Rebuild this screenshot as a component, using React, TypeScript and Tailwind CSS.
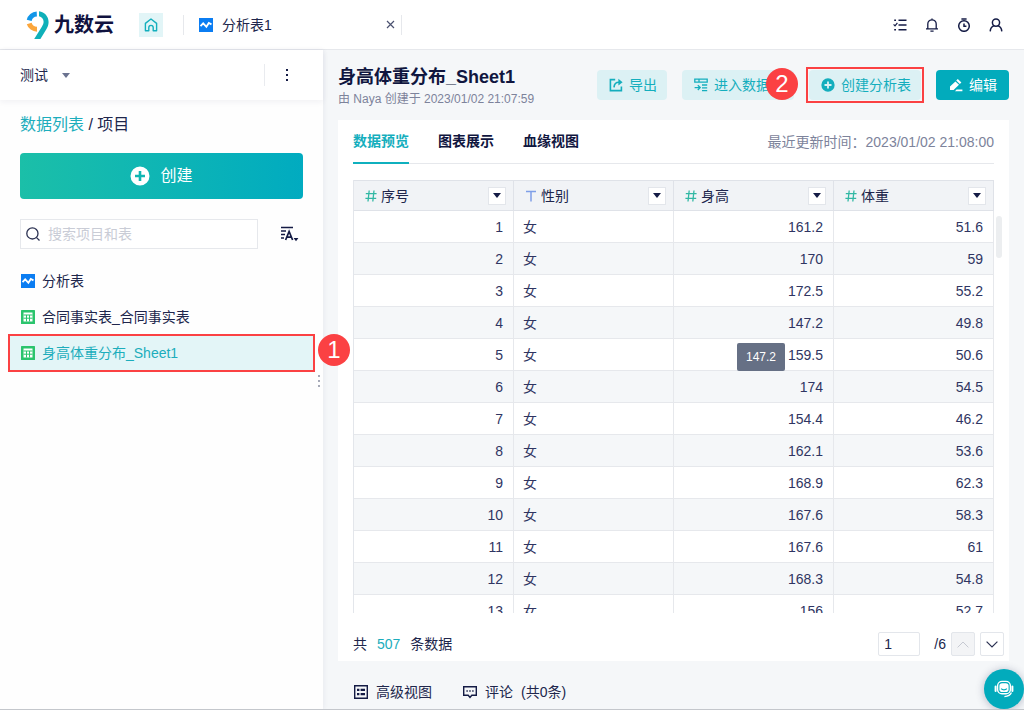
import { clsx } from 'clsx';
import type { ReactNode } from 'react';

const ROWS: [number, string, string, string][] = [
  [1, '女', '161.2', '51.6'],
  [2, '女', '170', '59'],
  [3, '女', '172.5', '55.2'],
  [4, '女', '147.2', '49.8'],
  [5, '女', '159.5', '50.6'],
  [6, '女', '174', '54.5'],
  [7, '女', '154.4', '46.2'],
  [8, '女', '162.1', '53.6'],
  [9, '女', '168.9', '62.3'],
  [10, '女', '167.6', '58.3'],
  [11, '女', '167.6', '61'],
  [12, '女', '168.3', '54.8'],
  [13, '女', '156', '52.7'],
];

const COLUMNS = [
  { label: '序号', type: 'number' },
  { label: '性别', type: 'text' },
  { label: '身高', type: 'number' },
  { label: '体重', type: 'number' },
];

const TABLES = [
  { name: '分析表', kind: 'analysis' },
  { name: '合同事实表_合同事实表', kind: 'sheet' },
  { name: '身高体重分布_Sheet1', kind: 'sheet', active: true },
];

const TABS = ['数据预览', '图表展示', '血缘视图'];

function Logo() {
  return (
    <a href="#" className="flex items-center gap-1 text-[#10123f]">
      <svg width="24" height="28" viewBox="0 0 24 28" fill="none" strokeWidth="5">
        <path d="M3.2 9.4A8.2 8.2 0 0 1 10.8 3" stroke="#1296e8" />
        <path d="M3.2 12.4A8.2 8.2 0 0 0 11 18.2" stroke="#fba63c" />
        <path
          d="M13 0.2C18.6 1 22.6 5.4 22.6 11C22.6 14 21.6 16.2 20.2 18.6L14.4 28H8.2L16 15.4C17.2 13.4 17.6 12.4 17.6 10.8C17.6 7.8 15.8 5.8 13 5.2Z"
          fill="#0fb0b9"
        />
      </svg>
      <span className="text-xl leading-6 font-bold">九数云</span>
    </a>
  );
}

function AnalysisIcon() {
  return (
    <svg width="14" height="14" viewBox="0 0 14 14" fill="none" className="shrink-0">
      <rect width="14" height="14" fill="#0b7df2" />
      <path d="M1.5 8.2L4.2 5.4L7.4 8.8L9.8 5L12.5 6.4" stroke="#fff" strokeWidth="1.8" />
    </svg>
  );
}

function SheetIcon() {
  return (
    <svg width="14" height="14" viewBox="0 0 14 14" fill="none" className="shrink-0">
      <rect width="14" height="14" rx="0.5" fill="#2bc46d" />
      <path d="M2.5 2.5h9v9h-9z" fill="#fff" />
      <path d="M2.5 5h9M2.5 8.2h9M5.5 5v6.5M8.5 5v6.5" stroke="#2bc46d" />
    </svg>
  );
}

function PlusIcon({ size }: { size: number }) {
  return (
    <svg width={size} height={size} viewBox="0 0 20 20" className="shrink-0">
      <path
        fillRule="evenodd"
        fill="currentColor"
        d="M10 0.5a9.5 9.5 0 1 0 0 19a9.5 9.5 0 0 0 0-19ZM8.7 5h2.6v3.7H15v2.6h-3.7V15H8.7v-3.7H5V8.7h3.7Z"
      />
    </svg>
  );
}

function HeaderIcons() {
  const cls = 'flex size-4 items-center justify-center';
  return (
    <div className="flex items-center gap-4 text-[#141b45]">
      <button className={cls} aria-label="任务">
        <svg width="14" height="14" viewBox="0 0 14 14" fill="none" stroke="currentColor" strokeWidth="1.6">
          <path d="M5.5 2.2H13.5M5.5 7H13.5M5.5 11.8H13.5M1.2 2.2H3M1.2 11.8H3" />
          <path d="M0.6 6.4L2 7.8L4.4 4.8" strokeWidth="1.2" />
        </svg>
      </button>
      <button className={cls} aria-label="通知">
        <svg width="14" height="14" viewBox="0 0 14 14" fill="none" stroke="currentColor" strokeWidth="1.3">
          <path d="M2.8 10.6V6A4.2 4.2 0 0 1 11.2 6V10.6M1 10.8H13M7 0.4V2M5.4 13.2H8.6" />
        </svg>
      </button>
      <button className={cls} aria-label="定时">
        <svg width="14" height="14" viewBox="0 0 14 14" fill="none" stroke="currentColor" strokeWidth="1.5">
          <circle cx="7" cy="8" r="5.3" />
          <path d="M4.4 0.9H9.6M7 5.4V8.2H9.4" />
        </svg>
      </button>
      <button className={cls} aria-label="账户">
        <svg width="14" height="14" viewBox="0 0 14 14" fill="none" stroke="currentColor" strokeWidth="1.5">
          <circle cx="7" cy="4.6" r="3.6" />
          <path d="M1.2 13.4C1.4 10 3.2 8.2 5.4 7.6M8.6 7.6C10.8 8.2 12.6 10 12.8 13.4" />
        </svg>
      </button>
    </div>
  );
}

function TopBar() {
  return (
    <header className="flex h-[50px] shrink-0 items-center border-b border-[#e6e8ec] bg-white pr-5 pl-[26px]">
      <Logo />
      <a
        href="#"
        aria-label="首页"
        className="ml-[25px] flex size-6 items-center justify-center bg-[#e2f5f7] text-[#14afbd]"
      >
        <svg width="14" height="14" viewBox="0 0 14 14" fill="none" stroke="currentColor" strokeWidth="1.4">
          <path d="M4.8 12.8H1.4V5.4L7 1L12.6 5.4V12.8H9.2V9.6A2.2 2.2 0 0 0 4.8 9.6Z" strokeLinejoin="round" />
        </svg>
      </a>
      <div className="ml-5 flex h-5 w-[219px] items-center border-x border-[#e6e8ec] pr-1.5 pl-[15px]">
        <AnalysisIcon />
        <span className="ml-[9px] flex-1">分析表1</span>
        <button aria-label="关闭" className="text-[#4b5170]">
          <svg width="9" height="9" viewBox="0 0 9 9" stroke="currentColor" strokeWidth="1.2">
            <path d="M1 1L8 8M8 1L1 8" />
          </svg>
        </button>
      </div>
      <div className="ml-auto">
        <HeaderIcons />
      </div>
    </header>
  );
}

function StepBadge({ n, className }: { n: number; className: string }) {
  return (
    <span
      className={clsx(
        'absolute z-20 flex size-8 items-center justify-center rounded-full bg-[#fb4143] text-2xl leading-8 text-white',
        className,
      )}
    >
      {n}
    </span>
  );
}

function Sidebar() {
  return (
    <aside className="relative z-10 flex w-[323px] shrink-0 flex-col bg-[#fefefe] shadow-[1px_0_5px_rgba(30,40,80,0.06)]">
      <div className="flex h-[50px] shrink-0 items-center bg-white pr-8 pl-5 shadow-[0_2px_6px_rgba(30,40,80,0.06)]">
        <button className="flex items-center gap-3.5">
          测试
          <svg width="8" height="5" viewBox="0 0 8 5" fill="#6b7390">
            <path d="M0 0H8L4 5Z" />
          </svg>
        </button>
        <span className="ml-auto h-[22px] w-px bg-[#e9ebef]" />
        <button aria-label="更多" className="ml-[18px] flex h-4 w-2 items-center justify-center">
          <svg width="4" height="14" viewBox="0 0 4 14" fill="#141b45">
            <path d="M1 1h2v2H1zM1 6h2v2H1zM1 11h2v2H1z" />
          </svg>
        </button>
      </div>

      <div className="px-5 pt-[13px]">
        <div className="text-base leading-6">
          <a href="#" className="text-[#1cadbc]">
            数据列表
          </a>
          <span> / 项目</span>
        </div>
        <button className="mt-4 flex h-[46px] w-full items-center justify-center gap-2.5 rounded-sm bg-linear-to-r from-[#1bbfa8] to-[#01abc0] text-base text-white">
          <PlusIcon size={20} />
          创建
        </button>
        <div className="mt-5 flex items-center justify-between pr-1">
          <label className="flex h-[30px] w-[238px] items-center gap-2 border border-[#e6e8ec] bg-white px-[5px]">
            <svg width="14" height="14" viewBox="0 0 14 14" fill="none" stroke="#2b3152" strokeWidth="1.3">
              <circle cx="6.4" cy="6.4" r="5.6" />
              <path d="M10.6 10.6L13.5 13.5" />
            </svg>
            <input
              aria-label="搜索"
              placeholder="搜索项目和表"
              className="min-w-0 flex-1 outline-none placeholder:text-[#c9ccd6]"
            />
          </label>
          <button aria-label="排序">
            <svg width="18" height="16" viewBox="0 0 18 16" fill="none" stroke="#141b45">
              <path d="M0 1.5H12M0 5H5M0 8.5H4M0 12H3" strokeWidth="1.3" />
              <path d="M4.6 14L8.1 5.4L11.6 14M5.8 11.2H10.4" strokeWidth="1.7" />
              <path d="M12.6 12H17.4L15 15.2Z" fill="#141b45" stroke="none" />
            </svg>
          </button>
        </div>
      </div>

      <ul className="mt-3.5 px-[9px]">
        {TABLES.map((t) => (
          <li key={t.name} className="relative">
            <a
              href="#"
              className={clsx(
                'flex h-9 items-center gap-[7px] px-3',
                t.active && 'bg-[#e3f5f7] text-[#1cadbc] outline-2 -outline-offset-1 outline-[#fb4143]',
              )}
            >
              {t.kind === 'analysis' ? <AnalysisIcon /> : <SheetIcon />}
              {t.name}
            </a>
            {t.active && <StepBadge n={1} className="-top-px -right-9" />}
          </li>
        ))}
      </ul>

      <svg
        width="2"
        height="12"
        viewBox="0 0 2 12"
        fill="#a6aab8"
        className="absolute top-[325px] right-[3px]"
      >
        <path d="M0 0h2v2H0zM0 5h2v2H0zM0 10h2v2H0z" />
      </svg>
    </aside>
  );
}

function ActionButton({ icon, children, className }: { icon: ReactNode; children: ReactNode; className: string }) {
  return (
    <button className={clsx('flex h-[30px] items-center gap-1.5 rounded-sm pl-3', className)}>
      {icon}
      {children}
    </button>
  );
}

function PageHead() {
  return (
    <div className="flex h-[70px] shrink-0 items-center justify-between">
      <div className="pt-1">
        <h1 className="text-lg leading-6 font-bold text-[#10163f]">身高体重分布_Sheet1</h1>
        <p className="text-xs leading-5 text-[#7d839b]">由 Naya 创建于 2023/01/02 21:07:59</p>
      </div>
      <div className="flex gap-[15px]">
        <ActionButton
          className="w-[70px] bg-[#dcf1f4] text-[#14aebd]"
          icon={
            <svg width="14" height="14" viewBox="0 0 14 14" fill="none" stroke="currentColor" strokeWidth="1.6">
              <path d="M6.2 1.6H1.4V12.6H12.4V8.6" />
              <path d="M5 9.4C5.2 6.2 7 4.2 10 4.2" />
              <path d="M9.4 0.8L13.6 4.2L9.4 7.6Z" fill="currentColor" stroke="none" />
            </svg>
          }
        >
          导出
        </ActionButton>
        <div className="relative">
          <ActionButton
            className="w-28 bg-[#dcf1f4] text-[#14aebd]"
            icon={
              <svg width="14" height="14" viewBox="0 0 14 14" fill="none" stroke="currentColor" strokeWidth="1.3">
                <path d="M0.8 1.2H13.2V4.2H0.8ZM5 1.2V4.2M8 7H13.2M8 9.8H13.2M8 12.6H13.2" />
                <path d="M0.6 9.6H6M3.8 7.2L6.2 9.6L3.8 12" />
              </svg>
            }
          >
            进入数据
          </ActionButton>
          <StepBadge n={2} className="-top-0.5 -right-1" />
        </div>
        <div className="outline-2 outline-offset-1 outline-[#fb4143]">
          <ActionButton className="w-28 bg-[#dcf1f4] text-[#14aebd]" icon={<PlusIcon size={14} />}>
            创建分析表
          </ActionButton>
        </div>
        <ActionButton
          className="w-[73px] bg-[#02abbc] text-white"
          icon={
            <svg width="15" height="14" viewBox="0 0 15 14" fill="currentColor">
              <path d="M9.8 1L13.4 4.4L11.8 6L8.2 2.6ZM7.4 3.4L11 6.8L5.6 12H2V8.6ZM8.6 11.6H14.4V13.2H7Z" />
            </svg>
          }
        >
          编辑
        </ActionButton>
      </div>
    </div>
  );
}

function TypeMark({ type }: { type: string }) {
  return (
    <svg width="12" height="12" viewBox="0 0 12 12" fill="none" strokeWidth="1.3" className="shrink-0">
      {type === 'number' ? (
        <path d="M4.2 0.5L3 11.5M9 0.5L7.8 11.5M0.8 3.6H11.6M0.4 8.4H11.2" stroke="#32b8a4" />
      ) : (
        <path d="M1 1.4H11M6 1.4V11.5" stroke="#7f9fe8" strokeWidth="1.5" />
      )}
    </svg>
  );
}

function DataTable() {
  return (
    <div className="relative mt-4 min-h-0 flex-1">
      <div className="h-full overflow-hidden">
        <table className="w-full table-fixed border-separate border-spacing-0 border-l border-[#e3e6eb]">
          <thead>
            <tr>
              {COLUMNS.map((c) => (
                <th
                  key={c.label}
                  className="h-[31px] border-y border-r border-[#dfe2e8] bg-[#f1f3f6] p-0 font-normal"
                >
                  <div className="flex items-center gap-1 pr-[7px] pl-[11px]">
                    <TypeMark type={c.type} />
                    <span className="flex-1 text-left">{c.label}</span>
                    <button
                      aria-label={`筛选${c.label}`}
                      className="flex size-[18px] items-center justify-center border border-[#e3e6eb] bg-white"
                    >
                      <svg width="8" height="5" viewBox="0 0 8 5" fill="#141b45">
                        <path d="M0 0H8L4 5Z" />
                      </svg>
                    </button>
                  </div>
                </th>
              ))}
            </tr>
          </thead>
          <tbody>
            {ROWS.map((row) => (
              <tr key={row[0]} className="even:bg-[#f5f7f9]">
                {row.map((v, i) => (
                  <td
                    key={i}
                    className={clsx(
                      'relative h-8 border-r border-b border-[#e6e8ec] py-0 pr-2.5 pl-[9px] text-[#2f3562]',
                      i !== 1 && 'text-right',
                    )}
                  >
                    {v}
                    {row[0] === 5 && i === 2 && (
                      <span className="absolute top-1 left-[63px] rounded-xs bg-[#667085] px-[9px] py-1 text-xs leading-5 text-white">
                        147.2
                      </span>
                    )}
                  </td>
                ))}
              </tr>
            ))}
          </tbody>
        </table>
      </div>
      <span className="absolute top-9 -right-2 h-[42px] w-1.5 rounded-full bg-[#eceef0]" />
    </div>
  );
}

function Pager() {
  const box = 'flex size-6 items-center justify-center rounded-xs border border-[#e3e6eb]';
  return (
    <div className="-mr-2.5 flex items-center">
      <input
        aria-label="页码"
        defaultValue="1"
        className="h-6 w-[42px] rounded-xs border border-[#e3e6eb] bg-white px-[5px] outline-none"
      />
      <span className="ml-3.5">/6</span>
      <button aria-label="上一页" disabled className={clsx(box, 'ml-[5px] bg-[#f3f4f6]')}>
        <svg width="12" height="7" viewBox="0 0 12 7" fill="none" stroke="#c6c9d2">
          <path d="M0.6 6.4L6 1L11.4 6.4" />
        </svg>
      </button>
      <button aria-label="下一页" className={clsx(box, 'ml-[5px] bg-white')}>
        <svg width="12" height="7" viewBox="0 0 12 7" fill="none" stroke="#2b3152" strokeWidth="1.2">
          <path d="M0.6 0.6L6 6L11.4 0.6" />
        </svg>
      </button>
    </div>
  );
}

function PreviewCard() {
  return (
    <section className="flex min-h-0 flex-1 flex-col bg-white px-[15px]">
      <div className="flex h-11 shrink-0 items-stretch border-b border-[#e6e8ec]">
        <nav className="flex gap-[29px]">
          {TABS.map((t, i) => (
            <button
              key={t}
              className={clsx(
                '-mb-px border-b-2 font-bold',
                i === 0 ? 'border-[#0fb0be] text-[#14aebd]' : 'border-transparent text-[#10163f]',
              )}
            >
              {t}
            </button>
          ))}
        </nav>
        <p className="ml-auto self-center text-[#7d839b]">最近更新时间：2023/01/02 21:08:00</p>
      </div>
      <DataTable />
      <div className="flex h-12 shrink-0 items-center justify-between pt-3.5">
        <p className="flex gap-2.5">
          <span>共</span>
          <span className="text-[#1cadbc]">507</span>
          <span>条数据</span>
        </p>
        <Pager />
      </div>
    </section>
  );
}

function BottomBar() {
  return (
    <footer className="flex h-12 shrink-0 items-center gap-[30px] px-4 pt-3.5">
      <button className="flex items-center gap-2">
        <svg width="14" height="14" viewBox="0 0 14 14" fill="none" stroke="#141b45" strokeWidth="1.4">
          <path d="M0.7 0.7H13.3V13.3H0.7Z" />
          <path d="M3 4.8H5.4M3 9.2H5.4M6.6 4.8H11M6.6 9.2H11" strokeWidth="2.2" />
        </svg>
        高级视图
      </button>
      <button className="flex items-center gap-2">
        <svg width="15" height="14" viewBox="0 0 15 14" fill="none" stroke="#141b45" strokeWidth="1.4">
          <path d="M1.7 1.7H14.3V10.3H9.8L8 12.4L6.2 10.3H1.7Z" />
          <path d="M4.4 6H5.8M7.3 6H8.7M10.2 6H11.6" />
        </svg>
        <span>评论</span>
        <span>(共0条)</span>
      </button>
    </footer>
  );
}

export default function App() {
  return (
    <div className="relative flex h-screen flex-col overflow-hidden border-b border-[#c4c7cc] bg-[#f5f7f9] font-['Liberation_Sans','Noto_Sans_CJK_SC',sans-serif] text-sm text-[#20264c]">
      <TopBar />
      <div className="flex min-h-0 flex-1">
        <Sidebar />
        <main className="flex min-w-0 flex-1 flex-col px-[15px]">
          <PageHead />
          <PreviewCard />
          <BottomBar />
        </main>
      </div>
      <button
        aria-label="在线客服"
        className="absolute right-0 bottom-0 z-20 flex size-10 items-center justify-center rounded-full bg-[#02abbc] shadow-[0_1px_8px_rgba(30,40,80,0.3)]"
      >
        <svg width="20" height="20" viewBox="0 0 20 20" fill="none" stroke="#fff" strokeWidth="1.4">
          <rect x="3.6" y="2.4" width="12.8" height="12.4" rx="4.4" />
          <rect x="5.4" y="4.2" width="9.2" height="8.8" rx="2.8" fill="#fff" stroke="none" />
          <path d="M7.2 9.6C8.4 11.2 11.6 11.2 12.8 9.6" stroke="#02abbc" strokeWidth="1.2" />
          <path d="M1.6 7.6V12M18.4 7.6V12" strokeWidth="2" strokeLinecap="round" />
          <path d="M17.4 13.6C16.4 16.4 14 17.4 10.4 17.6" />
        </svg>
      </button>
    </div>
  );
}
